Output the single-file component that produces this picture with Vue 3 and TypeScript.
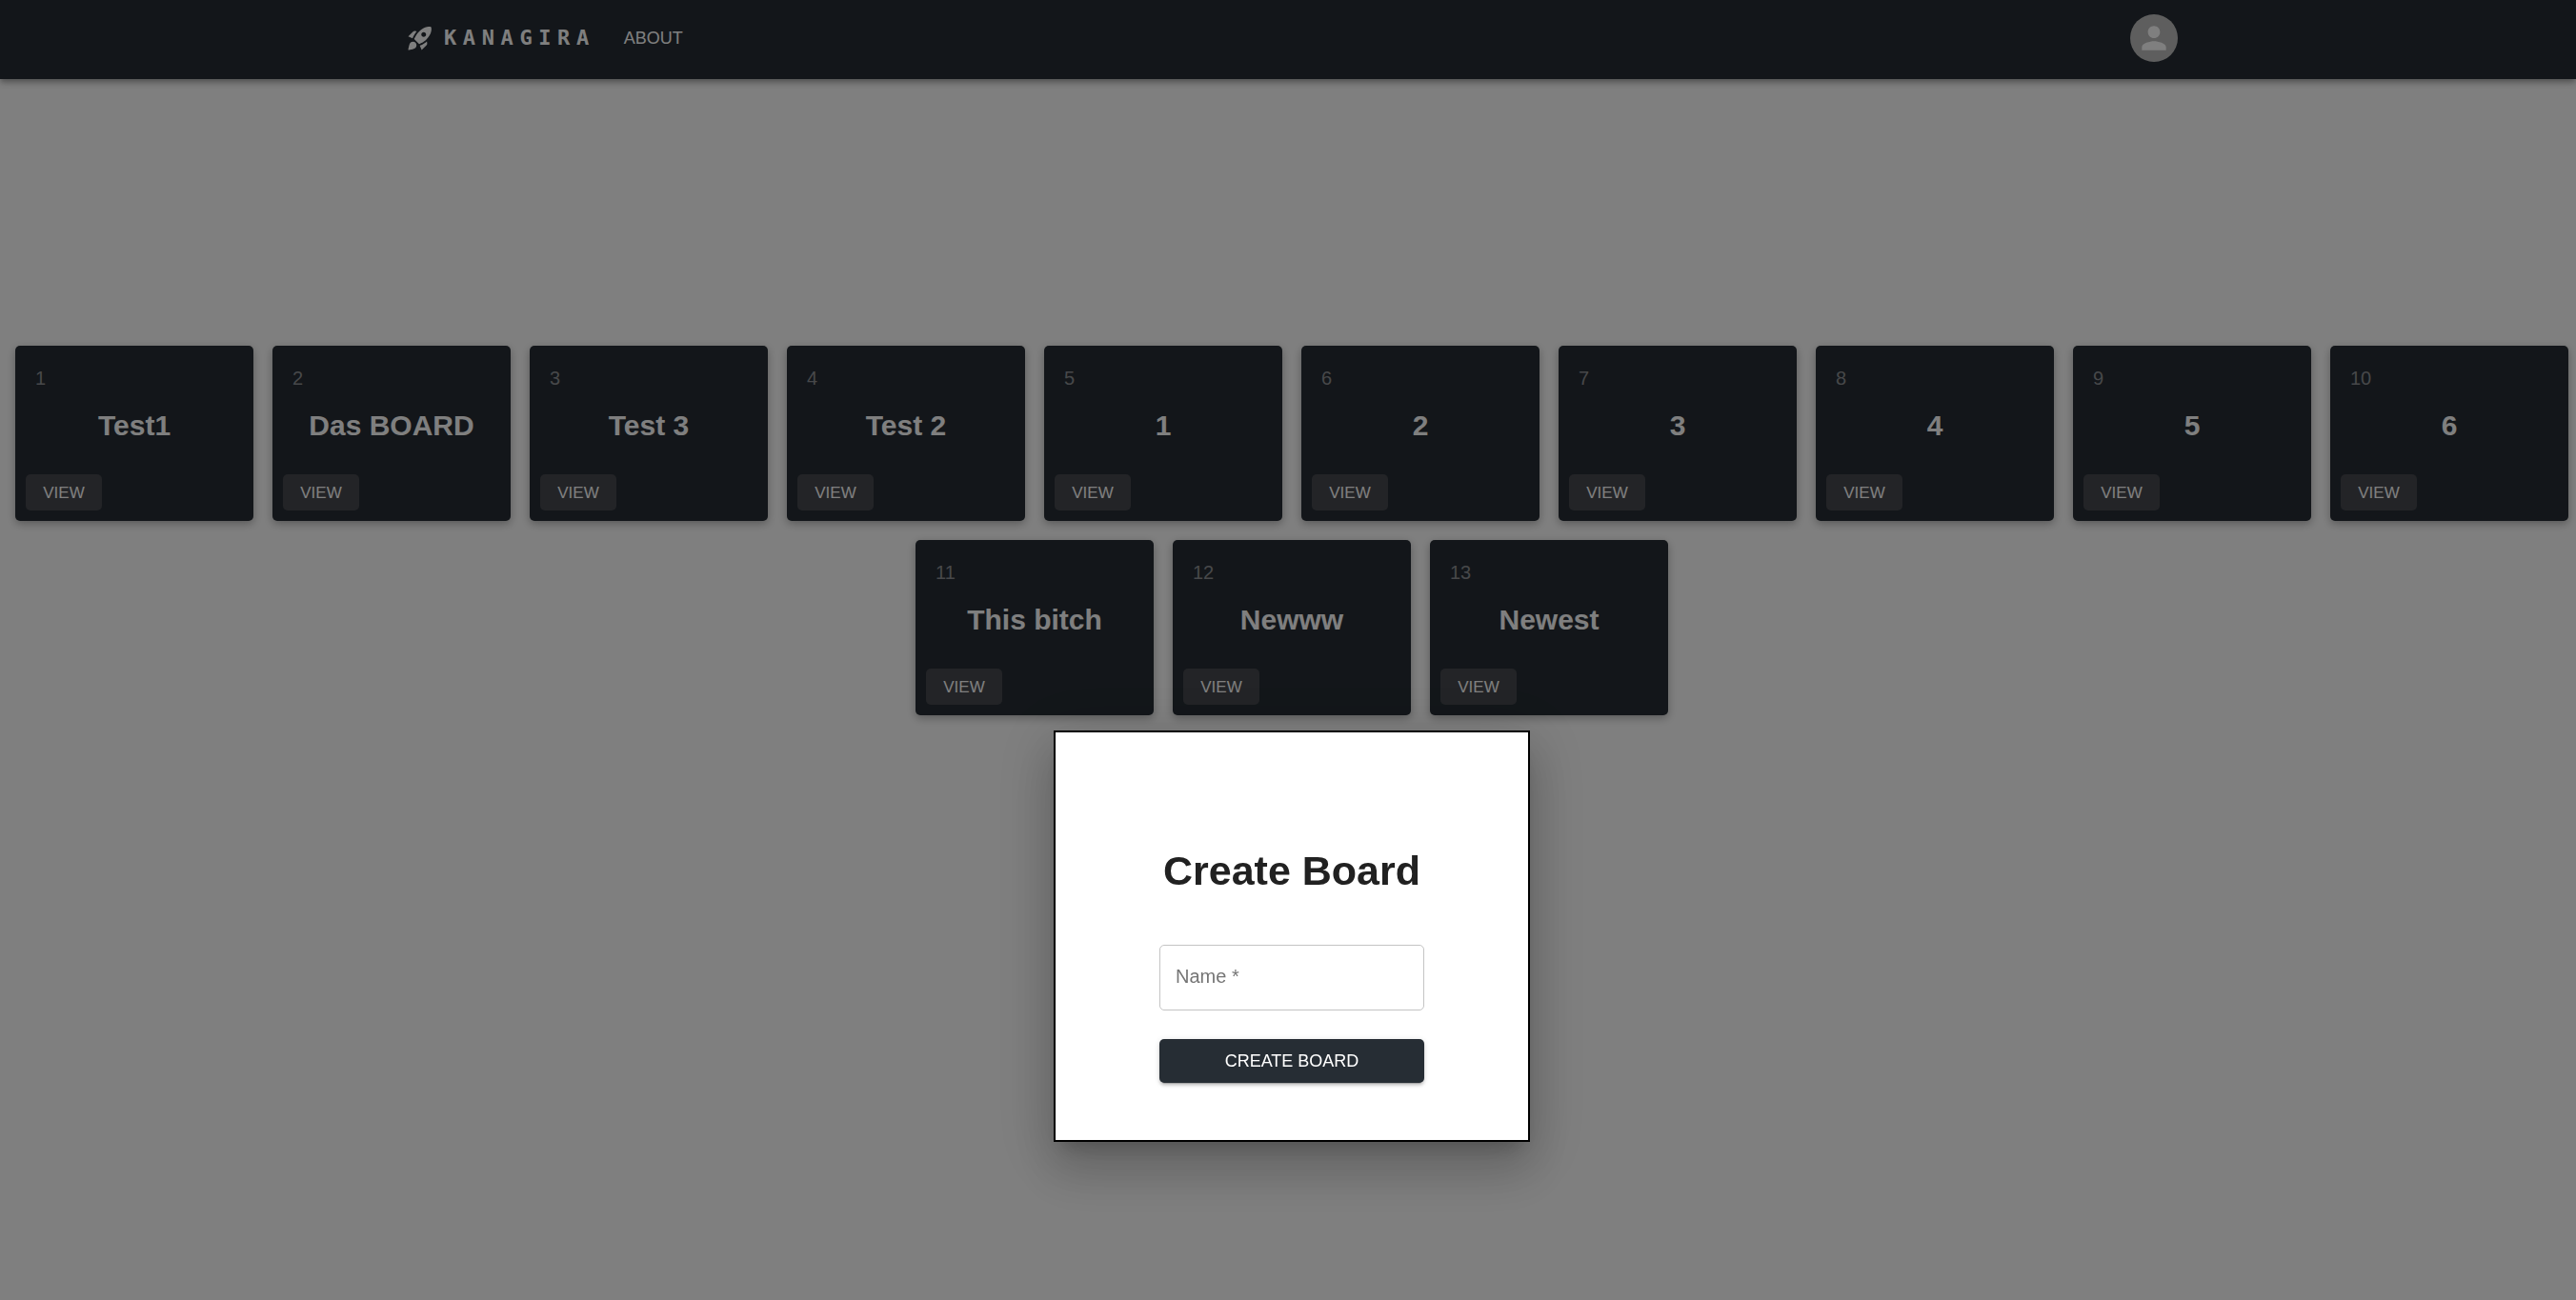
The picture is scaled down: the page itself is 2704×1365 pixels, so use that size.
<script setup lang="ts">
import { ref } from 'vue'

interface Board {
  id: number
  name: string
}

const names: string[] = [
  'Test1', 'Das BOARD', 'Test 3', 'Test 2', '1', '2', '3', '4', '5', '6',
  'This bitch', 'Newww', 'Newest',
]
const boards = ref<Board[]>(names.map((name, i) => ({ id: i + 1, name })))
const newName = ref('')

function createBoard(): void {
  const name = newName.value.trim()
  if (!name) return
  boards.value.push({ id: boards.value.length + 1, name })
  newName.value = ''
}
</script>

<template>
  <div class="page">
    <header class="app-bar">
      <div class="toolbar">
        <a class="brand" href="#">
          <svg class="brand-icon" viewBox="0 0 24 24" aria-hidden="true">
            <path
              d="M9.19 6.35c-2.04 2.29-3.44 5.58-3.57 5.89L2 10.69l4.05-4.05c.47-.47 1.15-.68 1.81-.55l1.33.26zM11.17 17s3.74-1.55 5.89-3.7c5.4-5.4 4.5-9.62 4.21-10.57-.95-.3-5.17-1.19-10.57 4.21C8.55 9.09 7 12.83 7 12.83L11.17 17zm6.48-2.19c-2.29 2.04-5.58 3.44-5.89 3.57L13.31 22l4.05-4.05c.47-.47.68-1.15.55-1.81l-.26-1.33zM9 18c0 .83-.34 1.58-.88 2.12C6.94 21.3 2 22 2 22s.7-4.94 1.88-6.12C4.42 15.34 5.17 15 6 15c1.66 0 3 1.34 3 3zm4-9c0-1.1.9-2 2-2s2 .9 2 2-.9 2-2 2-2-.9-2-2z"
            />
          </svg>
          <span class="brand-name">KANAGIRA</span>
        </a>
        <nav class="nav"><a class="nav-link" href="#about">ABOUT</a></nav>
        <button class="avatar" type="button" aria-label="Account">
          <svg class="avatar-icon" viewBox="0 0 24 24" aria-hidden="true">
            <path
              d="M12 12c2.21 0 4-1.79 4-4s-1.79-4-4-4-4 1.79-4 4 1.79 4 4 4zm0 2c-2.67 0-8 1.34-8 4v2h16v-2c0-2.66-5.33-4-8-4z"
            />
          </svg>
        </button>
      </div>
    </header>

    <main class="boards">
      <article v-for="board in boards" :key="board.id" class="card">
        <div class="card-content">
          <p class="card-id">{{ board.id }}</p>
          <h2 class="card-title">{{ board.name }}</h2>
        </div>
        <div class="card-actions">
          <button class="view" type="button">VIEW</button>
        </div>
      </article>
    </main>

    <div class="backdrop">
      <section class="modal" role="dialog" aria-modal="true" aria-labelledby="modal-title">
        <h1 id="modal-title" class="modal-title">Create Board</h1>
        <form class="form" novalidate @submit.prevent="createBoard">
          <div class="field">
            <input id="board-name" v-model="newName" class="field-input" type="text" required />
            <label v-show="!newName" class="field-label" for="board-name">Name *</label>
          </div>
          <button class="submit" type="submit">CREATE BOARD</button>
        </form>
      </section>
    </div>
  </div>
</template>

<style>
body {
  margin: 0;
  background: #fff;
}
</style>

<style scoped>
.page {
  box-sizing: border-box;
  min-height: 100vh;
  font-family: "Liberation Sans", Arial, sans-serif;
  color: #fff;
}

.page * {
  box-sizing: border-box;
}

.app-bar {
  padding-left: 8px;
  background: #262d34;
  box-shadow: 0 3px 5px -1px rgba(0, 0, 0, 0.2), 0 5px 6px 0 rgba(0, 0, 0, 0.14),
    0 1px 13px 0 rgba(0, 0, 0, 0.12);
}

.toolbar {
  display: flex;
  align-items: center;
  max-width: 1920px;
  height: 83px;
  margin: 0 auto;
  padding: 0 30px 3px;
}

.brand {
  display: flex;
  align-items: center;
  gap: 10px;
  color: inherit;
  text-decoration: none;
}

.brand-icon {
  width: 30px;
  height: 30px;
  fill: currentColor;
}

.brand-name {
  font-family: "DejaVu Sans Mono", monospace;
  font-size: 22px;
  line-height: 32px;
  font-weight: 700;
  letter-spacing: 0.3em;
}

.nav {
  flex: 1;
  padding-left: 30px;
}

.nav-link {
  color: inherit;
  font-size: 18px;
  line-height: 32px;
  text-decoration: none;
}

.avatar {
  display: flex;
  align-items: center;
  justify-content: center;
  width: 50px;
  height: 50px;
  padding: 0;
  border: 0;
  border-radius: 50%;
  background: #bdbdbd;
  color: #fff;
}

.avatar-icon {
  width: 38px;
  height: 38px;
  fill: currentColor;
}

.boards {
  display: flex;
  flex-wrap: wrap;
  justify-content: center;
  gap: 20px;
  padding: 280px 0 20px 8px;
}

.card {
  width: 250px;
  border-radius: 5px;
  background: #262d34;
  box-shadow: 0 3px 10px rgba(0, 0, 0, 0.3);
}

.card-content {
  padding: 20px 21px 0;
}

.card-id {
  margin: 0 0 16px;
  color: #8f9194;
  font-size: 20px;
  line-height: 28px;
}

.card-title {
  margin: 0;
  font-size: 30px;
  line-height: 40px;
  font-weight: 700;
  text-align: center;
}

.card-actions {
  display: flex;
  padding: 31px 11px 11px;
}

.view {
  width: 80px;
  height: 38px;
  padding: 1px 0 0;
  border: 0;
  border-radius: 5px;
  background: #46484e;
  color: #fff;
  font-family: inherit;
  font-size: 17px;
}

.backdrop {
  position: fixed;
  inset: 0;
  display: flex;
  align-items: flex-start;
  justify-content: center;
  padding: 767px 0 0 8px;
  background: rgba(0, 0, 0, 0.5);
}

.modal {
  display: flex;
  flex-direction: column;
  align-items: center;
  width: 500px;
  padding: 117px 60px 60px;
  border: 2px solid #000;
  background: #fff;
  color: #212121;
  box-shadow: 0 14px 19px -9px rgba(0, 0, 0, 0.2), 0 30px 48px 4px rgba(0, 0, 0, 0.14),
    0 11px 58px 10px rgba(0, 0, 0, 0.12);
}

.modal-title {
  margin: 0 0 50px;
  font-size: 43px;
  line-height: 56px;
  font-weight: 700;
  white-space: nowrap;
}

.form {
  display: flex;
  flex-direction: column;
  gap: 30px;
  width: 278px;
}

.field {
  position: relative;
}

.field-input {
  display: block;
  width: 100%;
  height: 69px;
  padding: 0 17px;
  border: 1px solid #c4c4c4;
  border-radius: 5px;
  outline: 0;
  background: transparent;
  color: inherit;
  font-family: inherit;
  font-size: 20px;
}

.field-label {
  position: absolute;
  top: 19px;
  left: 17px;
  color: #757575;
  font-size: 20px;
  line-height: 28px;
  pointer-events: none;
}

.submit {
  height: 46px;
  padding: 0;
  border: 0;
  border-radius: 5px;
  background: #262d34;
  color: #fff;
  font-family: inherit;
  font-size: 18px;
  box-shadow: 0 4px 1px -3px rgba(0, 0, 0, 0.2), 0 3px 3px 0 rgba(0, 0, 0, 0.14),
    0 1px 6px 0 rgba(0, 0, 0, 0.12);
}
</style>
